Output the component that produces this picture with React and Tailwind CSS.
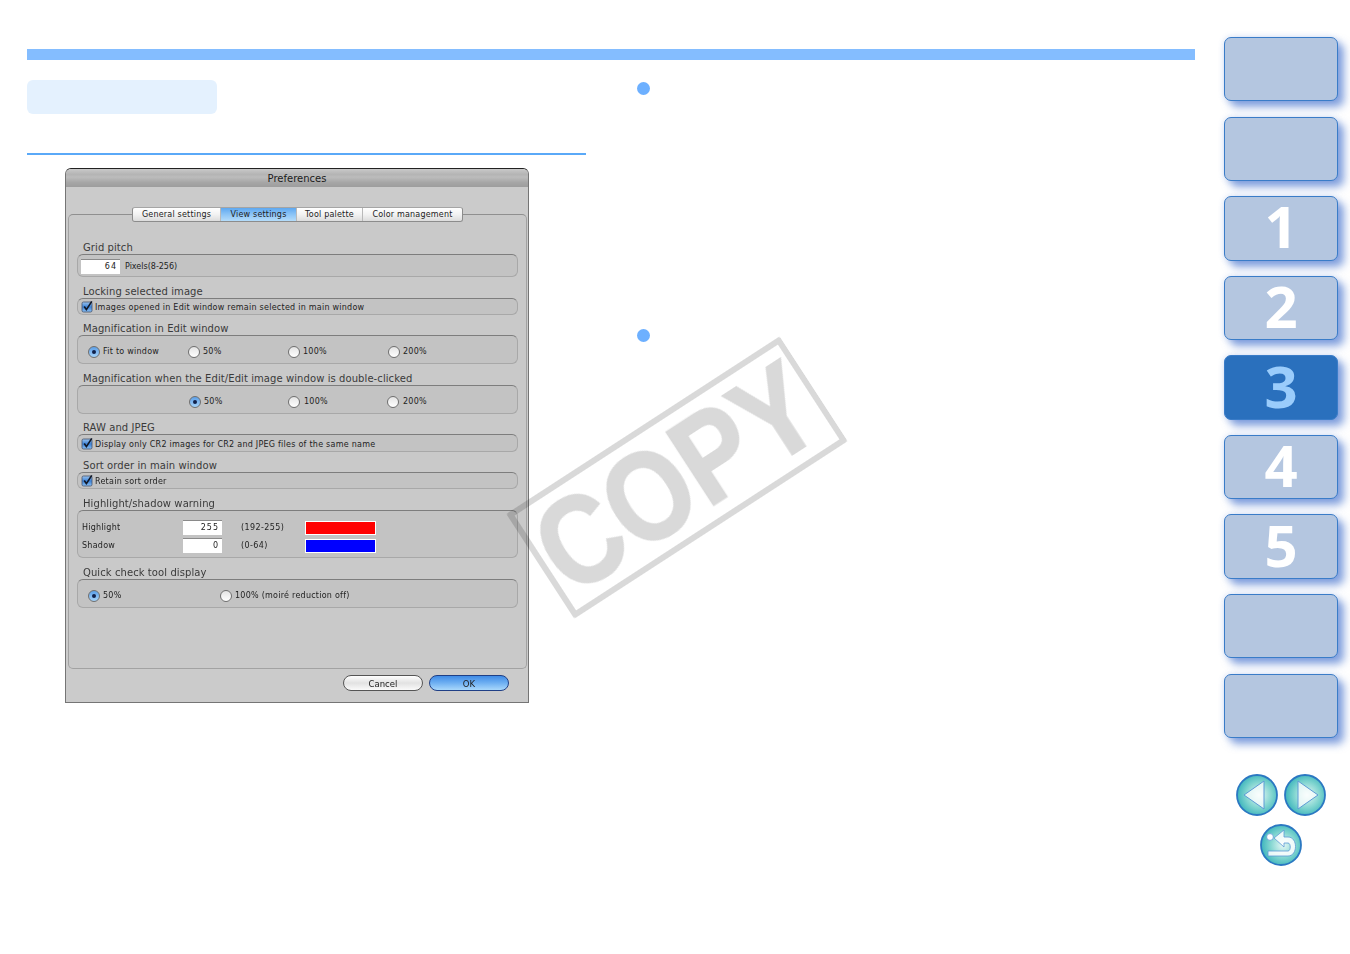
import React from 'react';

function Checkbox() {
  return (
    <svg className="w-[13px] h-[13px] shrink-0" viewBox="0 0 13 13">
      <defs>
        <linearGradient id="cb" x1="0" y1="0" x2="0" y2="1">
          <stop offset="0" stopColor="#9cc4ee" />
          <stop offset="0.5" stopColor="#3b82d8" />
          <stop offset="1" stopColor="#8cc0f2" />
        </linearGradient>
      </defs>
      <rect x="1" y="2" width="10" height="10" rx="1.5" fill="url(#cb)" stroke="#44506a" strokeWidth="0.8" />
      <path d="M3.2 6.6 L5.4 9.6 L10.8 1.4" fill="none" stroke="#111827" strokeWidth="1.7" />
    </svg>
  );
}

function Radio({ on }) {
  return (
    <span
      className={`flex items-center justify-center w-[12px] h-[12px] rounded-full shrink-0 border border-[#6f6f6f] ${
        on ? 'bg-gradient-to-b from-[#5b9fe8] to-[#a5d2f8]' : 'bg-gradient-to-b from-[#e4e4e4] to-[#ffffff]'
      }`}
    >
      {on && <span className="w-[4px] h-[4px] rounded-full bg-[#10204a]" />}
    </span>
  );
}

function RadioItem({ on, label, className }) {
  return (
    <div className={`flex items-center gap-[3px] ${className || ''}`}>
      <Radio on={on} />
      <span>{label}</span>
    </div>
  );
}

function Group({ label, height, className, children }) {
  return (
    <div className={className}>
      <div className="h-[14px] pt-[1px] pl-[6px] text-[10px] leading-[14px] tracking-[0.08px] text-[#3a3a3a]">{label}</div>
      <div className={`${height} rounded-[6px] border border-[#a8a8a8] border-t-[#7d7d7d] bg-[#c3c3c3] text-[8px] tracking-[0.25px] text-[#222]`}>
        {children}
      </div>
    </div>
  );
}

function CheckRow({ label }) {
  return (
    <div className="flex items-center h-full pl-[3px] gap-[1px]">
      <Checkbox />
      <span className="pt-[3px]">{label}</span>
    </div>
  );
}

function Tab({ width, active, children }) {
  return (
    <div
      className={`${width} flex items-center justify-center border-r border-[#b9b9b9] last:border-r-0 ${
        active ? 'bg-gradient-to-b from-[#5ea8f0] via-[#8cc4f6] to-[#b4dcfa]' : 'bg-gradient-to-b from-[#ffffff] via-[#f2f2f2] to-[#dcdcdc]'
      }`}
    >
      {children}
    </div>
  );
}

function LevelRow({ label, value, range, color, className }) {
  return (
    <div className={`flex items-center h-[15px] pl-[4px] ${className || ''}`}>
      <span className="w-[101px]">{label}</span>
      <div className="w-[39px] h-[15px] bg-white border-t border-[#8a8a8a] text-right pr-[3px] leading-[14px] tracking-[1px]">{value}</div>
      <span className="w-[83px] pl-[19px] tracking-[0.4px]">{range}</span>
      <div className={`w-[71px] h-[14px] border border-white ${color}`} />
    </div>
  );
}

function Dialog() {
  return (
    <div className="ml-[38px] mt-[13px] w-[464px] h-[535px] rounded-t-[6px] bg-[#cbcbcb] border border-[#757575] border-t-[#222] font-['DejaVu_Sans',sans-serif] text-[#222] blur-[0.3px] flex flex-col">
      <div className="h-[18px] pt-[1px] rounded-t-[5px] bg-[linear-gradient(180deg,#c9c9c9,#b4b4b4_30%,#bcbcbc_45%,#a6a6a6_75%,#9d9d9d)] flex items-center justify-center text-[10px] text-[#1b1b1b]">
        Preferences
      </div>
      <div className="mt-[27px] ml-[2px] mr-[1px] h-[455px] rounded-[5px] border border-[#a2a2a2] border-t-[#8f8f8f] bg-[#c9c9c9] px-[8px]">
        <div className="-mt-[8px] ml-[55px] w-[331px] h-[15px] flex text-[8px] rounded-[3px] overflow-hidden border border-[#8c8c8c] border-t-[#a5a5a5] tracking-[0.2px]">
          <Tab width="w-[88px]">General settings</Tab>
          <Tab width="w-[76px]" active>View settings</Tab>
          <Tab width="w-[66px]">Tool palette</Tab>
          <Tab width="w-[99px]">Color management</Tab>
        </div>

        <Group label="Grid pitch" height="h-[23px]" className="mt-[18px]">
          <div className="flex items-center h-full pl-[3px] pt-[1px] gap-[5px]">
            <div className="w-[39px] h-[15px] bg-white border-t border-[#8a8a8a] text-right pr-[3px] leading-[14px] tracking-[1px]">64</div>
            <span className="pt-[1px] tracking-[0]">Pixels(8-256)</span>
          </div>
        </Group>

        <Group label="Locking selected image" height="h-[17px]" className="mt-[7px]">
          <CheckRow label="Images opened in Edit window remain selected in main window" />
        </Group>

        <Group label="Magnification in Edit window" height="h-[29px]" className="mt-[6px]">
          <div className="flex items-center h-full pl-[10px] pt-[5px]">
            <RadioItem on label="Fit to window" className="w-[100px]" />
            <RadioItem label="50%" className="w-[100px] gap-[3px]" />
            <RadioItem label="100%" className="w-[100px] gap-[3px]" />
            <RadioItem label="200%" className="w-[100px] gap-[3px]" />
          </div>
        </Group>

        <Group label="Magnification when the Edit/Edit image window is double-clicked" height="h-[29px]" className="mt-[7px]">
          <div className="flex items-center h-full pl-[111px] pt-[5px]">
            <RadioItem on label="50%" className="w-[99px]" />
            <RadioItem label="100%" className="w-[99px] gap-[4px]" />
            <RadioItem label="200%" className="w-[99px] gap-[4px]" />
          </div>
        </Group>

        <Group label="RAW and JPEG" height="h-[18px]" className="mt-[6px]">
          <CheckRow label="Display only CR2 images for CR2 and JPEG files of the same name" />
        </Group>

        <Group label="Sort order in main window" height="h-[17px]" className="mt-[6px]">
          <CheckRow label="Retain sort order" />
        </Group>

        <Group label="Highlight/shadow warning" height="h-[48px]" className="mt-[7px]">
          <LevelRow label="Highlight" value="255" range="(192-255)" color="bg-[#ff0000]" className="mt-[9px]" />
          <LevelRow label="Shadow" value="0" range="(0-64)" color="bg-[#0000ff]" className="mt-[3px]" />
        </Group>

        <Group label="Quick check tool display" height="h-[29px]" className="mt-[7px]">
          <div className="flex items-center h-full pl-[10px] pt-[5px]">
            <RadioItem on label="50%" className="w-[132px]" />
            <RadioItem label="100% (moiré reduction off)" className="gap-[3px]" />
          </div>
        </Group>
      </div>
      <div className="mt-[6px] pr-[19px] flex justify-end gap-[6px] text-[8.5px]">
        <div className="w-[80px] h-[16px] pt-[2px] rounded-full border border-[#555] bg-gradient-to-b from-[#ffffff] via-[#e2e2e2] to-[#fafafa] flex items-center justify-center">Cancel</div>
        <div className="w-[80px] h-[16px] pt-[2px] rounded-full border border-[#1f3f86] bg-gradient-to-b from-[#3f8be6] via-[#6fb0f2] to-[#a9d8fb] flex items-center justify-center">OK</div>
      </div>
    </div>
  );
}

function NavButton({ active, children }) {
  return (
    <div
      className={`w-[114px] h-[64.4px] pb-[4px] rounded-[7px] flex items-center justify-center font-['Open_Sans',sans-serif] font-bold text-[58px] leading-none border-[1.5px] border-[#3a7cc8] shadow-[6px_6px_8px_rgba(50,100,200,0.6),0_0_6px_rgba(50,100,200,0.2)] ${
        active ? 'bg-[#2a70bd] text-[#9accfb]' : 'bg-[#b4c6e0] text-white'
      }`}
    >
      {children}
    </div>
  );
}

function RoundIcon({ id, children }) {
  return (
    <svg className="w-[42px] h-[42px]" viewBox="0 0 42 42">
      <defs>
        <radialGradient id={id} cx="0.55" cy="0.5" r="0.55">
          <stop offset="0" stopColor="#e8f8f6" />
          <stop offset="0.6" stopColor="#7ed4cf" />
          <stop offset="1" stopColor="#3cb4bc" />
        </radialGradient>
      </defs>
      <circle cx="21" cy="21" r="20" fill={`url(#${id})`} stroke="#2b78c2" strokeWidth="1.8" />
      {children}
    </svg>
  );
}

function Sidebar() {
  return (
    <div className="ml-[29px] w-[114px] pt-[37px] flex flex-col">
      <div className="flex flex-col gap-[15.2px]">
        <NavButton />
        <NavButton />
        <NavButton>1</NavButton>
        <NavButton>2</NavButton>
        <NavButton active>3</NavButton>
        <NavButton>4</NavButton>
        <NavButton>5</NavButton>
        <NavButton />
        <NavButton />
      </div>
      <div className="mt-[36px] flex justify-center gap-[6.5px]">
        <RoundIcon id="prev">
          <path d="M8 21 L28 7 V35 Z" fill="#fff" fillOpacity="0.75" stroke="#5c9bd6" strokeWidth="1" />
        </RoundIcon>
        <RoundIcon id="next">
          <path d="M34 21 L14 7 V35 Z" fill="#fff" fillOpacity="0.75" stroke="#5c9bd6" strokeWidth="1" />
        </RoundIcon>
      </div>
      <div className="mt-[8px] flex justify-center">
        <RoundIcon id="back">
          <circle cx="10" cy="13" r="3.4" fill="#fff" stroke="#5c9bd6" strokeWidth="0.8" />
          <path
            d="M8 32 V27 H28 C31 27 31 19 28 19 H24 V23 L14 14 L24 6 V13 H28 C38 13 38 32 28 32 Z"
            fill="#fff"
            fillOpacity="0.85"
            stroke="#5c9bd6"
            strokeWidth="0.8"
          />
        </RoundIcon>
      </div>
    </div>
  );
}

export default function App() {
  return (
    <div className="relative w-[1350px] h-[954px] bg-white overflow-hidden flex items-start">
      <div className="ml-[27px] w-[1168px] pt-[49px]">
        <div className="h-[11px] bg-[#84bdff]" />
        <div className="flex">
          <div className="w-[559px]">
            <div className="mt-[20px] w-[190px] h-[34px] rounded-[6px] bg-[#e4f1fe]" />
            <div className="mt-[39px] h-[2px] bg-[#5aa9f8]" />
            <Dialog />
          </div>
          <div className="ml-[51px] flex flex-col">
            <div className="mt-[22px] w-[13px] h-[13px] rounded-full bg-[#6db0ff]" />
            <div className="mt-[234px] w-[13px] h-[13px] rounded-full bg-[#6db0ff]" />
          </div>
        </div>
      </div>
      <Sidebar />

      {/* watermark stamp over the page */}
      <div className="absolute left-[514px] top-[415px] w-[326px] h-[125px] -rotate-[33deg] border-[6px] border-[#d9d9d9] rounded-[2px] mix-blend-multiply flex items-center justify-center">
        <span className="font-['Liberation_Sans',sans-serif] font-bold text-[126px] leading-none text-[#d9d9d9] [-webkit-text-stroke:2px_#d9d9d9] scale-x-[0.86] whitespace-nowrap">COPY</span>
      </div>
    </div>
  );
}
